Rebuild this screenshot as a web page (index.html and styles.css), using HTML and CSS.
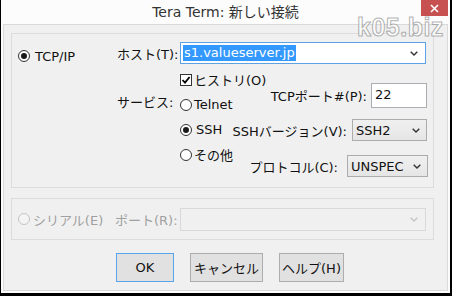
FILE: index.html
```html
<!DOCTYPE html>
<html lang="ja">
<head>
  <meta charset="UTF-8">
  <title>Tera Term: 新しい接続</title>
  <link rel="stylesheet" href="styles.css">
</head>
<body>

  <div class="window">
    <!-- Title bar -->
    <div class="titlebar">
      <span></span>
      <span class="title">Tera Term: 新しい接続</span>
      <span class="close">
        <svg width="9" height="9" viewBox="0 0 9 9"><path d="M1 1L8 8M8 1L1 8" stroke="#fff" stroke-width="1.6"/></svg>
      </span>
    </div>

    <!-- Dialog body -->
    <div class="client">

      <!-- TCP/IP group -->
      <div class="group tcp">
        <div class="mode"><span class="radio checked"></span>TCP/IP</div>
        <div class="settings">
          <div class="host-row">
            <span class="label">ホスト(T):</span>
            <div class="combo focus">
              <span class="sel">s1.valueserver.jp</span>
              <svg class="chev" width="8" height="5" viewBox="0 0 8 5"><polyline points="0.7,0.7 4,4 7.3,0.7" fill="none" stroke="#333" stroke-width="1.4"/></svg>
            </div>
          </div>
          <div class="lower">
            <div class="col-a"><span>サービス:</span></div>
            <div class="col-b">
              <div class="opt">
                <span class="check"><svg width="10" height="10" viewBox="0 0 10 10"><path d="M1.5 5L4 7.6L8.6 2" fill="none" stroke="#000" stroke-width="1.8"/></svg></span>ヒストリ(O)
              </div>
              <div class="opt"><span class="radio"></span>Telnet</div>
              <div class="opt ssh"><span class="radio checked"></span>SSH</div>
              <div class="opt"><span class="radio"></span>その他</div>
            </div>
            <div class="col-c">
              <div class="field port">
                <span>TCPポート#(P):</span>
                <div class="input">22</div>
              </div>
              <div class="field ver">
                <span>SSHバージョン(V):</span>
                <div class="select">SSH2<svg class="chev" width="8" height="5" viewBox="0 0 8 5"><polyline points="0.7,0.7 4,4 7.3,0.7" fill="none" stroke="#333" stroke-width="1.4"/></svg></div>
              </div>
              <div class="field proto">
                <span>プロトコル(C):</span>
                <div class="select">UNSPEC<svg class="chev" width="8" height="5" viewBox="0 0 8 5"><polyline points="0.7,0.7 4,4 7.3,0.7" fill="none" stroke="#333" stroke-width="1.4"/></svg></div>
              </div>
            </div>
          </div>
        </div>
      </div>

      <!-- Serial group (disabled) -->
      <div class="group serial">
        <div class="mode"><span class="radio disabled"></span>シリアル(E)</div>
        <span class="label">ポート(R):</span>
        <div class="combo disabled">
          <span></span>
          <svg class="chev" width="8" height="5" viewBox="0 0 8 5"><polyline points="0.7,0.7 4,4 7.3,0.7" fill="none" stroke="#c4c4c4" stroke-width="1.4"/></svg>
        </div>
      </div>

      <!-- Buttons -->
      <div class="buttons">
        <div class="btn ok">OK</div>
        <div class="btn cancel">キャンセル</div>
        <div class="btn help">ヘルプ(H)</div>
      </div>
    </div>

    <div class="watermark">k05.biz</div>
  </div>

</body>
</html>
```

FILE: styles.css
```css
/* Global */
body {
  margin: 0;
  font-family: "DejaVu Sans", "Noto Sans CJK JP", sans-serif;
  font-size: 13px;
  color: #111;
  background: #fff;
}

/* Window frame */
.window {
  position: relative;
  width: 452px;
  height: 296px;
  box-sizing: border-box;
  border-left: 1px solid #000;
  border-right: 2px solid #000;
  border-bottom: 3px solid #000;
  background: #fcfcfc;
  padding: 0 2px 2px;
  display: flex;
  flex-direction: column;
}

.titlebar {
  height: 24px;
  flex: none;
  display: grid;
  grid-template-columns: 1fr auto 1fr;
  align-items: start;
}

.title {
  font-size: 14px;
  line-height: 24px;
  color: #333;
  white-space: nowrap;
}

.close {
  justify-self: end;
  width: 27px;
  height: 16px;
  background: #c75050;
  display: flex;
  align-items: center;
  justify-content: center;
}

.client {
  flex: 1;
  border: 1px solid #dadada;
  background: #f0f0f0;
  display: flex;
  flex-direction: column;
}

/* Group boxes */
.group {
  border: 1px solid #dcdcdc;
  margin-left: 7px;
  width: 423px;
  box-sizing: border-box;
  flex: none;
}

.tcp {
  margin-top: 8px;
  height: 155px;
  display: flex;
}

.mode {
  width: 105px;
  flex: none;
  box-sizing: border-box;
  padding-left: 6px;
  height: 16px;
  margin-top: 14px;
  display: flex;
  align-items: center;
  gap: 5px;
  white-space: nowrap;
}

.settings {
  flex: 1;
  min-width: 0;
  display: flex;
  flex-direction: column;
}

.host-row {
  display: flex;
  align-items: center;
  margin-top: 8px;
  height: 22px;
}

.label {
  width: 63px;
  flex: none;
  white-space: nowrap;
}

.combo {
  width: 246px;
  height: 22px;
  box-sizing: border-box;
  border: 1px solid #5ea2e6;
  background: #fff;
  display: flex;
  align-items: center;
  justify-content: space-between;
  padding: 0 7px 0 2px;
}

.sel {
  background: #3399ff;
  color: #fff;
  line-height: 16px;
  padding: 0 1px;
}

.lower {
  display: flex;
}

.col-a {
  width: 63px;
  flex: none;
  padding-top: 26px;
  line-height: 25px;
  white-space: nowrap;
}

.col-b {
  flex: 1;
  min-width: 0;
  margin-top: 3px;
  white-space: nowrap;
}

.opt {
  height: 25px;
  display: flex;
  align-items: center;
  gap: 2px;
}

.opt.ssh {
  gap: 4px;
}

.col-c {
  flex: none;
  display: flex;
  flex-direction: column;
  align-items: flex-end;
  margin-top: 19px;
  margin-right: 6px;
}

.field {
  display: flex;
  align-items: center;
  white-space: nowrap;
}

.input {
  width: 56px;
  height: 25px;
  box-sizing: border-box;
  margin-left: 4px;
  border: 1px solid #abadb3;
  background: #fff;
  padding-left: 3px;
  line-height: 22px;
}

.select {
  height: 22px;
  box-sizing: border-box;
  border: 1px solid #acacac;
  background: linear-gradient(#f0f0f0, #e5e5e5);
  display: flex;
  align-items: center;
  justify-content: space-between;
  padding: 0 6px 0 3px;
}

.ver {
  margin-top: 11px;
}

.ver .select {
  width: 75px;
  margin-left: 5px;
}

.proto {
  margin-top: 14px;
  margin-right: -1px;
}

.proto .select {
  width: 81px;
  margin-left: 9px;
}

/* Radio / checkbox */
.radio {
  position: relative;
  width: 12px;
  height: 12px;
  flex: none;
  box-sizing: border-box;
  border: 1px solid #333;
  border-radius: 50%;
  background: #fff;
}

.radio.checked::after {
  content: "";
  position: absolute;
  inset: 2px;
  border-radius: 50%;
  background: #1a1a1a;
}

.radio.disabled {
  border-color: #c4c4c4;
  background: #f4f4f4;
}

.check {
  width: 12px;
  height: 12px;
  flex: none;
  box-sizing: border-box;
  border: 1px solid #333;
  background: #fff;
  display: flex;
  align-items: center;
  justify-content: center;
}

/* Serial group */
.serial {
  margin-top: 10px;
  height: 42px;
  display: flex;
  align-items: center;
  color: #a0a0a0;
}

.serial .mode {
  margin-top: 0;
  gap: 3px;
}

.serial .label {
  margin-left: -2px;
  width: 65px;
}

.combo.disabled {
  height: 23px;
  border-color: #d9d9d9;
  background: #f0f0f0;
}

/* Buttons */
.buttons {
  display: flex;
  gap: 16px;
  margin-top: 13px;
  padding-left: 112px;
}

.btn {
  height: 29px;
  box-sizing: border-box;
  border: 1px solid #adadad;
  background: #e1e1e1;
  display: flex;
  align-items: center;
  justify-content: center;
  white-space: nowrap;
}

.ok {
  width: 58px;
  border-color: #5aa5ea;
}

.cancel {
  width: 73px;
}

.help {
  width: 65px;
}

/* Site watermark */
.watermark {
  position: absolute;
  top: 13px;
  left: 356px;
  font-family: "Liberation Sans", sans-serif;
  font-weight: bold;
  font-size: 25px;
  letter-spacing: 0.5px;
  color: rgba(255, 255, 255, 0.75);
  -webkit-text-stroke: 1px rgba(110, 110, 110, 0.55);
}
```
